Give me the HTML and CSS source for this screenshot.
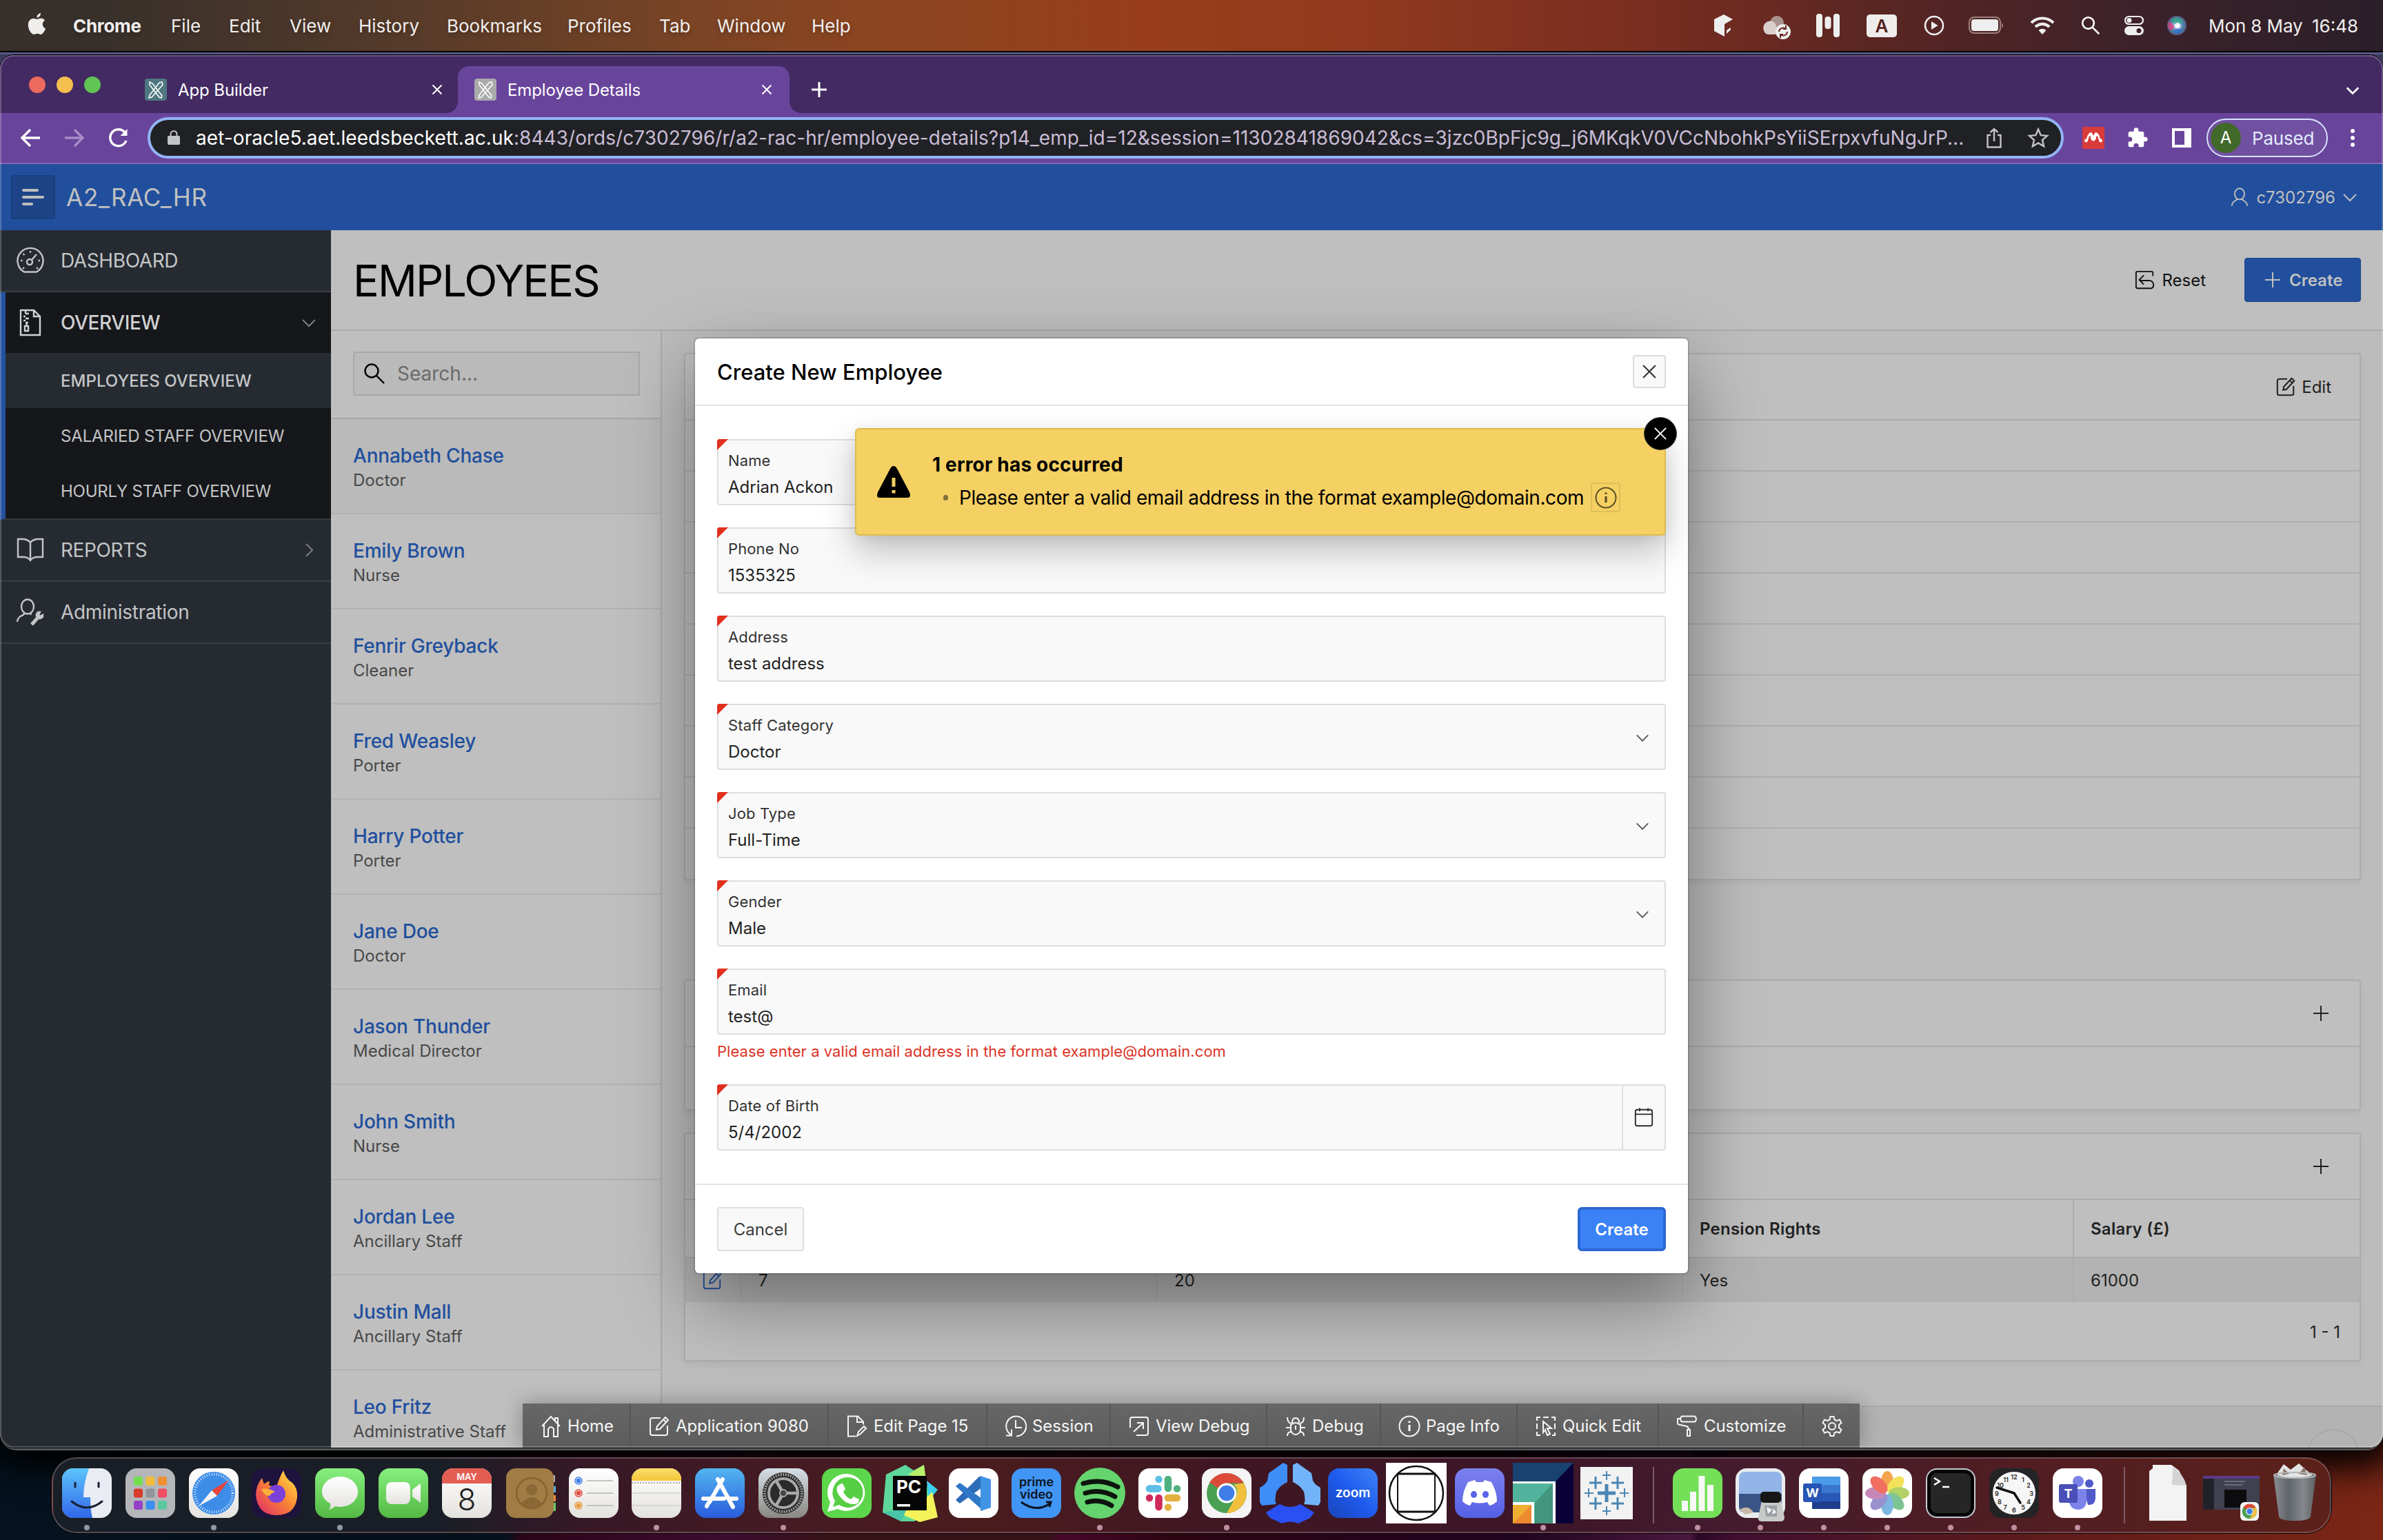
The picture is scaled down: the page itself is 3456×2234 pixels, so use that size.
FILE: index.html
```html
<!DOCTYPE html>
<html lang="en">
<head>
<meta charset="utf-8">
<title>Employee Details</title>
<link rel="stylesheet" href="styles.css">
</head>
<body>
<svg class="defs" width="0" height="0">
  <defs>
    <linearGradient id="g-blue" x1="0" y1="0" x2="0" y2="1"><stop offset="0" stop-color="#5cc4fb"/><stop offset="1" stop-color="#3267ea"/></linearGradient>
    <linearGradient id="g-store" x1="0" y1="0" x2="0" y2="1"><stop offset="0" stop-color="#52b5f0"/><stop offset="1" stop-color="#2a5cdc"/></linearGradient>
    <linearGradient id="g-green" x1="0" y1="0" x2="0" y2="1"><stop offset="0" stop-color="#86ef7e"/><stop offset="1" stop-color="#54b944"/></linearGradient>
    <linearGradient id="g-white" x1="0" y1="0" x2="0" y2="1"><stop offset="0" stop-color="#ffffff"/><stop offset="1" stop-color="#e4e2de"/></linearGradient>
    <linearGradient id="g-fire" x1="1" y1="0" x2="0" y2="1"><stop offset="0" stop-color="#fff04a"/><stop offset=".45" stop-color="#fb8a32"/><stop offset="1" stop-color="#e0266a"/></linearGradient>
    <linearGradient id="g-yellow" x1="0" y1="0" x2="0" y2="1"><stop offset="0" stop-color="#fbdf6b"/><stop offset="1" stop-color="#f4c43a"/></linearGradient>
    <linearGradient id="g-gray" x1="0" y1="0" x2="0" y2="1"><stop offset="0" stop-color="#d5dfe6"/><stop offset="1" stop-color="#8a8783"/></linearGradient>
    <linearGradient id="g-disc" x1="0" y1="0" x2="0" y2="1"><stop offset="0" stop-color="#7c80ee"/><stop offset="1" stop-color="#5560e4"/></linearGradient>
    <linearGradient id="g-zoom" x1="1" y1="0" x2="0" y2="1"><stop offset="0" stop-color="#3f86f5"/><stop offset=".5" stop-color="#1e5aee"/><stop offset="1" stop-color="#1a45b8"/></linearGradient>
    <linearGradient id="g-trash" x1="0" y1="0" x2="1" y2="0"><stop offset="0" stop-color="#8c9094"/><stop offset=".35" stop-color="#5f6468"/><stop offset=".7" stop-color="#85898d"/><stop offset="1" stop-color="#5a5e61"/></linearGradient>
    <radialGradient id="g-siri"><stop offset="0" stop-color="#ffffff"/><stop offset=".3" stop-color="#a9b4e4"/><stop offset=".65" stop-color="#4a83a8"/><stop offset="1" stop-color="#5a5a80"/></radialGradient>
    <symbol id="i-x" viewBox="0 0 16 16"><path d="M1.5 1.5l13 13M14.5 1.5l-13 13"/></symbol>
    <symbol id="i-down" viewBox="0 0 24 24"><path d="M3 8l9 9 9-9"/></symbol>
    <symbol id="i-right" viewBox="0 0 24 24"><path d="M8 3l9 9-9 9"/></symbol>
    <symbol id="i-plus" viewBox="0 0 24 24"><path d="M12 1v22M1 12h22"/></symbol>
    <symbol id="i-tools" viewBox="0 0 32 32"><path d="M7 5l4 2 14 18-1 3-3-1L7 9zM25 5l-4 1L7 24l-1 4 4-1L26 9z"/></symbol>
    <symbol id="i-edit" viewBox="0 0 32 32"><path d="M18 4H6a3 3 0 0 0-3 3v19a3 3 0 0 0 3 3h19a3 3 0 0 0 3-3V15M12 21l1-5L25 3l4 4-12 13zM22 6l4 4"/></symbol>
    <symbol id="i-info" viewBox="0 0 32 32"><circle cx="16" cy="16" r="14.5"/><path d="M16 14v9M16 8.5v2.6" stroke-width="3.2"/></symbol>
    <symbol id="i-user" viewBox="0 0 32 32"><ellipse cx="16" cy="11" rx="7.5" ry="8.6"/><path d="M12.500 18.500c-1 4-8 2.500-8.500 11M19.500 18.500c1 4 8 2.500 8.500 11"/></symbol>
    <symbol id="i-search" viewBox="0 0 32 32"><circle cx="12" cy="12" r="9.500"/><path d="M19 19l11 11"/></symbol>
    <symbol id="i-chrome" viewBox="0 0 60 60"><circle cx="30" cy="30" r="28" fill="#4aa052"/><path d="M30 2a28 28 0 0 1 24 14H30a14 14 0 0 0-12 7L6 15A28 28 0 0 1 30 2z" fill="#dc4a3a"/><path d="M54 16a28 28 0 0 1-24 42l12-21a14 14 0 0 0-2-19z" fill="#f3c03e"/><circle cx="30" cy="30" r="14" fill="#fff"/><circle cx="30" cy="30" r="11" fill="#3f7de8"/></symbol>
  </defs>
</svg>

<header class="menubar">
  <svg class="apple" viewBox="0 0 26 32"><path fill="#efeeed" d="M18.500 0c.3 3-2.300 6.500-5.500 6.600C12.600 3.500 15.600.4 18.500 0zM13.300 8.800c1.200 0 3-1.400 5.600-1.400 2 0 4.300 1 5.700 3.200-5 3-4.100 9.900 1 11.900-1 3-4 8.400-7 8.400-1.900 0-2.700-1.200-5-1.200s-3.100 1.200-5 1.200C4.700 30.900.3 23.400.3 17.300c0-6 3.700-9.600 7.500-9.600 2.500 0 4.300 1.100 5.500 1.100z"/></svg>
  <nav class="menus">
    <b class="m1">Chrome</b><span class="m2">File</span><span class="m3">Edit</span><span class="m4">View</span><span class="m5">History</span><span class="m6">Bookmarks</span><span class="m7">Profiles</span><span class="m8">Tab</span><span class="m9">Window</span><span>Help</span>
  </nav>
  <div class="status">
    <svg width="28" height="34" viewBox="0 0 28 34"><path fill="#eee" d="M14 1L27 8 15 15v18L0 25V8zM18 24l6-4v3l-6 6z"/></svg>
    <svg width="44" height="36" viewBox="0 0 44 36"><circle cx="21" cy="11" r="10" fill="#aa928c"/><path fill="#d9d0cd" d="M2 22a10 10 0 0 1 16-11l6 14-6 3H10a8 8 0 0 1-8-6z"/><circle cx="30" cy="24" r="11" fill="#eee"/><path d="M24 24a6 6 0 0 1 10-4M36 24a6 6 0 0 1-10 4M34 15v5h-4M26 33v-5h4" fill="none" stroke="#6a2a22" stroke-width="2"/></svg>
    <svg width="36" height="34" viewBox="0 0 36 34"><rect x="1" width="9" height="34" rx="4" fill="#eee"/><rect x="13.500" y="4" width="9" height="18" rx="4" fill="#eee"/><rect x="26" width="9" height="34" rx="4" fill="#eee"/></svg>
    <span class="input-a">A</span>
    <svg width="30" height="30" viewBox="0 0 30 30"><circle cx="15" cy="15" r="13" fill="none" stroke="#eee" stroke-width="2.500"/><path d="M11 9l9.500 6-9.500 6z" fill="#eee"/></svg>
    <svg width="52" height="26" viewBox="0 0 52 26"><rect x="1" y="1" width="45" height="23" rx="7" fill="none" stroke="#9d807c" stroke-width="2"/><rect x="4" y="4" width="39" height="17" rx="4" fill="#eee"/><path d="M48 9q4 4 0 8z" fill="#9d807c"/></svg>
    <svg width="36" height="28" viewBox="0 0 36 28"><path d="M2 10a23 23 0 0 1 32 0M8 16a14 14 0 0 1 20 0" fill="none" stroke="#eee" stroke-width="4.200"/><path d="M18 27l-5.500-6a8 8 0 0 1 11 0z" fill="#eee"/></svg>
    <svg width="28" height="28" viewBox="0 0 32 32" class="ic white w3"><use href="#i-search"/></svg>
    <svg width="30" height="30" viewBox="0 0 30 30"><rect x="2" y="2" width="26" height="11" rx="5.500" fill="none" stroke="#eee" stroke-width="2.200"/><circle cx="8" cy="7.500" r="3.500" fill="#eee"/><rect x="1" y="16" width="28" height="13" rx="6.500" fill="#eee"/><circle cx="22" cy="22.500" r="3.500" fill="#3c2128"/></svg>
    <svg width="28" height="28" viewBox="0 0 28 28"><circle cx="14" cy="14" r="14" fill="url(#g-siri)"/><path d="M6 5q8-6 17 2 0 5-8 6-7-1-9-8z" fill="#2fac84" opacity=".7"/><path d="M2 9q6 0 8 8-3 4-6 4-4-5-2-12z" fill="#e83a78" opacity=".75"/><path d="M10 20q6-3 13 1-6 7-13 4z" fill="#2c6cd0" opacity=".7"/><circle cx="15" cy="14" r="4" fill="#fff" opacity=".85"/></svg>
    <span class="date">Mon 8 May</span><span class="time">16:48</span>
  </div>
</header>

<div class="backwin">
<div class="window">
  <div class="tabs">
    <div class="lights"><i class="red"></i><i class="amber"></i><i class="green"></i></div>
    <div class="tab one"><svg class="fav teal" viewBox="0 0 32 32"><use href="#i-tools"/></svg><span>App Builder</span><svg class="ic white close"><use href="#i-x"/></svg></div>
    <div class="tab two"><svg class="fav grey" viewBox="0 0 32 32"><use href="#i-tools"/></svg><span>Employee Details</span><svg class="ic white close"><use href="#i-x"/></svg></div>
    <svg class="ic white newtab"><use href="#i-plus"/></svg>
    <svg class="ic white tabmenu"><use href="#i-down"/></svg>
  </div>
  <div class="toolbar">
    <svg class="ic white nav" viewBox="0 0 32 32"><path d="M30 16H4M16 4L4 16l12 12"/></svg>
    <svg class="ic white nav dim" viewBox="0 0 32 32"><path d="M2 16h26M16 4l12 12-12 12"/></svg>
    <svg class="ic white nav" viewBox="0 0 32 32"><path d="M27 20A12 12 0 1 1 24.500 7.500"/><path d="M28.500 3v10h-10z" fill="#fff" stroke="none"/></svg>
    <div class="omnibox">
      <svg class="lock" viewBox="0 0 18 22"><rect x="0" y="8" width="18" height="13" rx="2" fill="#c4c5c8"/><path d="M4.500 9V5.500a4.500 4.500 0 0 1 9 0V9" fill="none" stroke="#c4c5c8" stroke-width="2"/></svg>
      <div class="url"><b>aet-oracle5.aet.leedsbeckett.ac.uk</b><span>:8443/ords/c7302796/r/a2-rac-hr/employee-details?p14_emp_id=12&amp;session=11302841869042&amp;cs=3jzc0BpFjc9g_j6MKqkV0VCcNbohkPsYiiSErpxvfuNgJrP...</span></div>
      <svg class="ic share" viewBox="0 0 32 32"><path d="M11 12H6.500v17.500h19V12H21M16 21V3M10.500 8L16 3l5.500 5"/></svg>
      <svg class="ic star" viewBox="0 0 32 32"><path d="M16 3.500l3.700 8.600 9.300.8-7 6.200 2.100 9.100L16 23.400l-8.100 4.800L10 19.100l-7-6.200 9.300-.8z"/></svg>
    </div>
    <svg class="mendeley" viewBox="0 0 32 32"><path fill="#d83b3a" d="M0 0h32v32H0z"/><path d="M5.500 20q2-1 2.500-5 1-4 3.500-4 3 .5 4.500 4 1.500-3.500 4.500-4 2.500 0 3.500 4 .5 4 2.500 5" stroke="#fff" stroke-width="2.600" fill="none"/><circle cx="12" cy="11" r="2.700" fill="#fff"/><circle cx="20" cy="11" r="2.700" fill="#fff"/><circle cx="5.500" cy="20" r="2.400" fill="#fff"/><circle cx="26.500" cy="20" r="2.400" fill="#fff"/><path d="M12 12q2 3 1 6M20 12q-2 3-1 6" stroke="#fff" stroke-width="2"/><circle cx="16" cy="17.500" r="3" fill="#fff"/></svg>
    <svg class="puzzle" viewBox="0 0 24 24"><path fill="#fff" d="M20.500 11H19V7a2 2 0 0 0-2-2h-4V3.500a2.500 2.500 0 0 0-5 0V5H4a2 2 0 0 0-2 2v3.800h1.500a2.700 2.700 0 0 1 0 5.400H2V20c0 1.100.9 2 2 2h3.800v-1.500a2.700 2.700 0 0 1 5.400 0V22H17a2 2 0 0 0 2-2v-4h1.500a2.500 2.500 0 0 0 0-5z"/></svg>
    <i class="panel"></i>
    <div class="pill"><span class="ava">A</span><span>Paused</span></div>
    <div class="dots"><i></i><i></i><i></i></div>
  </div>

  <div class="apphead">
    <button class="burger"><i class="l1"></i><i class="l2"></i><i class="l3"></i></button>
    <span class="appname">A2_RAC_HR</span>
    <div class="userbox"><svg class="ic" viewBox="0 0 32 32"><use href="#i-user"/></svg><span>c7302796</span><svg class="ic chev"><use href="#i-down"/></svg></div>
  </div>

  <div class="body">
    <aside class="side">
      <a class="row"><svg class="ic" viewBox="0 0 40 40"><path d="M11 36.500a18.500 18.500 0 1 1 18 0z"/><circle cx="19" cy="22" r="4"/><path d="M22 19l7-8M20 6v2.500M6 20h2.500M31.500 20H34M9.500 10l2 2M11 30l-2 2M29 30l2 2"/></svg><span>DASHBOARD</span></a>
      <div class="group">
        <a class="row cur"><svg class="ic" viewBox="0 0 40 40"><path d="M6 2h19l9 9v27H6zM25 2v9h9M13 2v5M13 7h5M13 11h-3M13 14h5M13 17h-3M13 20h4M12 25h5v7h-5zM14.500 20v5"/></svg><span>OVERVIEW</span><svg class="ic tog"><use href="#i-down"/></svg></a>
        <a class="sub on">EMPLOYEES OVERVIEW</a>
        <a class="sub s2">SALARIED STAFF OVERVIEW</a>
        <a class="sub s3">HOURLY STAFF OVERVIEW</a>
      </div>
      <a class="row"><svg class="ic" viewBox="0 0 40 40"><path d="M20 9Q16 4 8 4H2v26h7q8 0 11 5 3-5 11-5h7V4h-6q-8 0-12 5zM20 9v26"/></svg><span>REPORTS</span><svg class="ic tog"><use href="#i-right"/></svg></a>
      <a class="row"><svg class="ic" viewBox="0 0 40 40"><ellipse cx="16" cy="12" rx="9" ry="10.500"/><path d="M12 21c-1 5-10 3-11 13M20 21l1 3"/><path d="M22 38l8-9" stroke-width="5"/><path d="M31 20q-4 4-1 8 4 3 8-1v-3l-4 2-2-2 2-4z" fill="#c3c5c6"/></svg><span class="adm">Administration</span></a>
    </aside>

    <main class="main">
      <div class="titlebar">
        <h1>EMPLOYEES</h1>
        <div class="reset"><svg class="ic" viewBox="0 0 32 32"><path d="M28 10V5a2 2 0 0 0-2-2H4a2 2 0 0 0-2 2v22a2 2 0 0 0 2 2h22q3-1 3-5v-1q-1-5-6-6H8M14 9l-7 7 7 7"/></svg><span>Reset</span></div>
        <div class="create"><svg class="ic"><use href="#i-plus"/></svg><span>Create</span></div>
      </div>
      <div class="cols">
        <section class="list">
          <div class="searchrow"><div class="search"><svg class="ic"><use href="#i-search"/></svg><span>Search...</span></div></div>
          <div class="person hov"><b>Annabeth Chase</b><span>Doctor</span></div>
          <div class="person"><b>Emily Brown</b><span>Nurse</span></div>
          <div class="person"><b>Fenrir Greyback</b><span>Cleaner</span></div>
          <div class="person"><b>Fred Weasley</b><span>Porter</span></div>
          <div class="person"><b>Harry Potter</b><span>Porter</span></div>
          <div class="person"><b>Jane Doe</b><span>Doctor</span></div>
          <div class="person"><b>Jason Thunder</b><span>Medical Director</span></div>
          <div class="person"><b>John Smith</b><span>Nurse</span></div>
          <div class="person"><b>Jordan Lee</b><span>Ancillary Staff</span></div>
          <div class="person"><b>Justin Mall</b><span>Ancillary Staff</span></div>
          <div class="person"><b>Leo Fritz</b><span>Administrative Staff</span></div>
        </section>
        <section class="detail">
          <div class="card c1"><div class="chead"><div class="editbtn"><svg class="ic"><use href="#i-edit"/></svg><span>Edit</span></div></div>
            <i></i><i></i><i></i><i></i><i></i><i></i><i></i><i></i><i class="last"></i></div>
          <div class="card c2"><div class="chead"><svg class="ic add"><use href="#i-plus"/></svg></div></div>
          <div class="card c3"><div class="chead"><svg class="ic add"><use href="#i-plus"/></svg></div>
            <div class="tr th"><span></span><span></span><span></span><span>Pension Rights</span><span>Salary (£)</span></div>
            <div class="tr td"><span class="pen"><svg class="ic"><use href="#i-edit"/></svg></span><span>7</span><span>20</span><span>Yes</span><span>61000</span></div>
            <div class="pager">1 - 1</div></div>
          <div class="foot"><i class="totop"></i></div>
        </section>
      </div>
    </main>
  </div>

  <div class="devbar">
    <a class="d1"><svg class="ic"><path d="M3 16L16 2l13 14M6 14v17h6V20q4-6 8 0v11h6V14M22 8V4h4v9"/></svg>Home</a>
    <a class="d2"><svg class="ic"><use href="#i-edit"/></svg>Application 9080</a>
    <a class="d3"><svg class="ic"><path d="M14 30.500H3V1.500h14l8 8v4M16 2v8h8M16 30l2-6 8-8 3 3-8 8z"/></svg>Edit Page 15</a>
    <a class="d4"><svg class="ic"><path d="M17 30.500a14.500 14.500 0 1 0-12-6l4 4M16 7v11h9M2 29.500h8v-9"/></svg>Session</a>
    <a class="d5"><svg class="ic"><path d="M3 18V6a3 3 0 0 1 3-3h20a3 3 0 0 1 3 3v20a3 3 0 0 1-3 3h-14M8 24l14-13M13 11h9v9"/></svg>View Debug</a>
    <a class="d6"><svg class="ic"><path d="M9 14q7-6 14 0v8q-2 6-7 6t-7-6zM16 15v6M11 11q0-7 5-7t5 7M2 18h7M23 18h7M4 3q0 8 6 9M28 3q0 8-6 9M4 30q0-6 6-6M28 30q0-6-6-6"/></svg>Debug</a>
    <a class="d7"><svg class="ic"><use href="#i-info"/></svg>Page Info</a>
    <a class="d8"><svg class="ic"><path d="M3 8V3h5M12 3h8M24 3h5v5M29 12v8M29 25v4h-4M3 12v8M3 24v5h5M12 9l12 10h-6l4 8-4 2-3-8-3 4z"/></svg>Quick Edit</a>
    <a class="d9"><svg class="ic"><path d="M8 1.500h19q4 4 0 8H8q-4-4 0-8zM6 5H2v6q0 3 4 3l9 2q3 1 3 5M16 21h4v9h-4z"/></svg>Customize</a>
    <a class="d10"><svg class="ic"><circle cx="16" cy="16" r="5"/><path d="M13.500 2h5l1 4.500 3 1.500 4.500-1.500 2.500 4.500-3.500 3v4l3.500 3-2.500 4.500-4.500-1.500-3 1.500-1 4.500h-5l-1-4.500-3-1.500L5 25.500 2.500 21 6 18v-4l-3.500-3L5 6.500 9.500 8l3-1.500z"/></svg></a>
  </div>

  <div class="modal">
    <div class="mhead"><span>Create New Employee</span><button class="mclose"><svg class="ic"><use href="#i-x"/></svg></button></div>
    <div class="mbody">
      <div class="field"><label>Name</label><span>Adrian Ackon</span></div>
      <div class="field"><label>Phone No</label><span>1535325</span></div>
      <div class="field"><label>Address</label><span>test address</span></div>
      <div class="field sel"><label>Staff Category</label><span>Doctor</span><svg class="ic"><use href="#i-down"/></svg></div>
      <div class="field sel"><label>Job Type</label><span>Full-Time</span><svg class="ic"><use href="#i-down"/></svg></div>
      <div class="field sel"><label>Gender</label><span>Male</span><svg class="ic"><use href="#i-down"/></svg></div>
      <div class="field err"><label>Email</label><span>test@</span></div>
      <p class="errtext">Please enter a valid email address in the format example@domain.com</p>
      <div class="field"><label>Date of Birth</label><span>5/4/2002</span><div class="cal"><svg class="ic" viewBox="0 0 32 32"><rect x="3" y="4" width="26" height="25" rx="3"/><path d="M3 11h26M9.500 1.500v5M22.500 1.500v5"/></svg></div></div>
    </div>
    <div class="mfoot"><button class="cancel">Cancel</button><button class="ok">Create</button></div>
    <div class="alert">
      <svg class="warn" viewBox="0 0 48 46"><path d="M24 0q3 0 5 4l18 34q3 8-3 8H4q-6 0-3-8L19 4q2-4 5-4z"/><path d="M24 17v13M24 35v4.500" stroke="#f5d062" stroke-width="5"/></svg>
      <div class="atext"><b>1 error has occurred</b><p><i></i><span>Please enter a valid email address in the format example@domain.com</span><em><svg class="ic"><use href="#i-info"/></svg></em></p></div>
      <button class="aclose"><svg class="ic"><use href="#i-x"/></svg></button>
    </div>
  </div>
</div>
</div>

<div class="dock">
  <div class="app run"><svg viewBox="0 0 88 88"><rect x="8" y="8" width="72" height="72" rx="16" fill="#e9ecf2"/><path d="M24 8h23q-8 22-8 42h10q0 18 3 30H24a16 16 0 0 1-16-16V24A16 16 0 0 1 24 8z" fill="url(#g-blue)"/><path d="M27 29v6M61 29v6M22 56q22 18 44 0" fill="none" stroke="#1a2030" stroke-width="3" stroke-linecap="round"/></svg></div>
  <div class="app"><svg viewBox="0 0 88 88"><rect x="8" y="8" width="72" height="72" rx="16" fill="#b4b6ba"/><rect x="20" y="20" width="13" height="13" rx="3" fill="#72e04e"/><rect x="37.500" y="20" width="13" height="13" rx="3" fill="#f2bd3c"/><rect x="55" y="20" width="13" height="13" rx="3" fill="#ef9030"/><rect x="20" y="37.500" width="13" height="13" rx="3" fill="#d83a2c"/><rect x="37.500" y="37.500" width="13" height="13" rx="3" fill="#90959b"/><rect x="55" y="37.500" width="13" height="13" rx="3" fill="#f04c62"/><rect x="20" y="55" width="13" height="13" rx="3" fill="#9440c8"/><rect x="37.500" y="55" width="13" height="13" rx="3" fill="#3a90f0"/><rect x="55" y="55" width="13" height="13" rx="3" fill="#5cc8a0"/></svg></div>
  <div class="app run"><svg viewBox="0 0 88 88"><rect x="8" y="8" width="72" height="72" rx="16" fill="url(#g-white)"/><circle cx="44" cy="44" r="31" fill="#3d8ce8"/><circle cx="44" cy="44" r="27.500" fill="none" stroke="#d9ecff" stroke-width="4" stroke-dasharray="1 2.500"/><path d="M66 25L49 48l-8-8z" fill="#e8453a"/><path d="M22 63l19-23 8 8z" fill="#f3f3f3"/></svg></div>
  <div class="app"><svg viewBox="0 0 88 88"><rect x="8" y="8" width="72" height="72" rx="16" fill="#1e133c"/><path d="M14 47q0-14 9-25l3 9q4-4 8-4l-1 6q8 0 10 6 4-16 11-28 3 12 13 18 8 8 7 21-3 26-30 26T14 47z" fill="url(#g-fire)"/><circle cx="44" cy="45" r="13" fill="#7a40d8"/><path d="M22 38q10-2 20 4-6 2-8 6-8 0-12-10z" fill="#fdaf3a"/></svg></div>
  <div class="app run"><svg viewBox="0 0 88 88"><rect x="8" y="8" width="72" height="72" rx="16" fill="url(#g-green)"/><path d="M44 20c15 0 26 10 26 22S59 64 44 64q-4 0-7-1-4 4-9 5 3-4 2-9c-7-4-12-10-12-17 0-12 11-22 26-22z" fill="url(#g-white)"/></svg></div>
  <div class="app"><svg viewBox="0 0 88 88"><rect x="8" y="8" width="72" height="72" rx="16" fill="url(#g-green)"/><rect x="19" y="28" width="35" height="32" rx="8" fill="url(#g-white)"/><path d="M57 39l12-9v28l-12-9z" fill="url(#g-white)"/></svg></div>
  <div class="app"><svg viewBox="0 0 88 88"><rect x="8" y="8" width="72" height="72" rx="16" fill="url(#g-white)"/><path d="M8 30v-6A16 16 0 0 1 24 8h40a16 16 0 0 1 16 16v6z" fill="#e35d52"/><text x="44" y="25" class="t-may">MAY</text><text x="44" y="69" class="t-day">8</text></svg></div>
  <div class="app"><svg viewBox="0 0 88 88"><path d="M76 18h4v10h-4z" fill="#aaa"/><path d="M76 34h5v9h-5z" fill="#5aa8d8"/><path d="M76 47h5v9h-5z" fill="#ea8a3a"/><path d="M76 58h5v12h-5z" fill="#64c864"/><rect x="9" y="8" width="69" height="72" rx="14" fill="#a17c45"/><circle cx="46" cy="44" r="22" fill="none" stroke="#85632f" stroke-width="2.500"/><circle cx="46" cy="39" r="8" fill="#8a6836"/><path d="M31 59q15-18 30 0-15 12-30 0z" fill="#8a6836"/></svg></div>
  <div class="app"><svg viewBox="0 0 88 88"><rect x="8" y="8" width="72" height="72" rx="16" fill="url(#g-white)"/><g stroke-width="1.500" fill="none"><circle cx="22" cy="26" r="5" stroke="#3a7be8"/><circle cx="22" cy="44" r="5" stroke="#e0483c"/><circle cx="22" cy="62" r="5" stroke="#e89a3a"/></g><circle cx="22" cy="26" r="3.300" fill="#3a7be8"/><circle cx="22" cy="44" r="3.300" fill="#e0483c"/><circle cx="22" cy="62" r="3.300" fill="#e89a3a"/><path d="M34 26h38M34 44h38M34 62h38" stroke="#b4b4b4" stroke-width="1.600"/></svg></div>
  <div class="app run"><svg viewBox="0 0 88 88"><rect x="8" y="8" width="72" height="72" rx="16" fill="url(#g-white)"/><path d="M8 26v-2A16 16 0 0 1 24 8h40a16 16 0 0 1 16 16v2z" fill="url(#g-yellow)"/><path d="M8 29h72" stroke="#aaa" stroke-width="2" stroke-dasharray="2 2"/><path d="M8 44h72M8 62h72" stroke="#cfcfcb" stroke-width="1.600"/></svg></div>
  <div class="app"><svg viewBox="0 0 88 88"><rect x="8" y="8" width="72" height="72" rx="16" fill="url(#g-store)"/><path d="M48 24L29 57M41 24l22 40M20 52h30M59 52h9M25 63l2-4" stroke="#fff" stroke-width="6" stroke-linecap="round"/></svg></div>
  <div class="app run"><svg viewBox="0 0 88 88"><rect x="8" y="8" width="72" height="72" rx="16" fill="url(#g-gray)"/><circle cx="44" cy="44" r="30" fill="#2b2b2c"/><circle cx="44" cy="44" r="27" fill="none" stroke="#9a9a9a" stroke-width="4" stroke-dasharray="2 1.600"/><circle cx="44" cy="44" r="21" fill="none" stroke="#a8a8a8" stroke-width="4"/><path d="M44 44h21M44 44L33.500 26M44 44L33.500 62" stroke="#a8a8a8" stroke-width="4.500"/><circle cx="44" cy="44" r="5" fill="#444" stroke="#a8a8a8" stroke-width="2"/></svg></div>
  <div class="app"><svg viewBox="0 0 88 88"><rect x="8" y="8" width="72" height="72" rx="16" fill="#5cd64a"/><path d="M44 16a27 27 0 1 1-13 51l-15 4 4-14A27 27 0 0 1 44 16z" fill="#fff"/><path d="M45 21a22 22 0 1 1-12 40l-9 3 3-9A22 22 0 0 1 45 21z" fill="#56cf44"/><path d="M34 31l4-1 4 8-3 4q4 8 11 11l4-4 8 4q0 6-6 7-12 1-20-9-8-8-6-16z" fill="#fff"/></svg></div>
  <div class="app"><svg viewBox="0 0 88 88"><path d="M9 17L37 3l12 8L64 3l2 22 10 40-26 20H31L4 72z" fill="#5ed89a"/><path d="M64 3l3 22-26-8z" fill="#b8f06a"/><path d="M68 26l16 13-13 16z" fill="#3cd0f0"/><path d="M76 42l8 37-26 7-32-14 34-14z" fill="#f4f45a"/><path d="M4 72l27 13 8-18z" fill="#4ac4a8"/><rect x="19" y="19" width="49" height="50" fill="#050505"/><text x="24" y="44" class="t-pc">PC</text><path d="M25 60h19v3.500H25z" fill="#fff"/></svg></div>
  <div class="app"><svg viewBox="0 0 88 88"><rect x="8" y="8" width="72" height="72" rx="16" fill="#fff"/><path d="M56 20v16L24 59l-6-5 34-34z" fill="#2c6cb8"/><path d="M18 34l6-5 32 23v16z" fill="#2f78c8"/><path d="M54 19l15 5v41l-15 5z" fill="#3f94e4"/></svg></div>
  <div class="app"><svg viewBox="0 0 88 88"><rect x="8" y="8" width="72" height="72" rx="16" fill="#4195f4"/><text x="44" y="34" class="t-pv">prime</text><text x="44" y="52" class="t-pv">video</text><path d="M22 57q22 16 42 2M58 57l7 0-2 7" fill="none" stroke="#0c1420" stroke-width="3"/></svg></div>
  <div class="app run"><svg viewBox="0 0 88 88"><circle cx="44" cy="44" r="37" fill="#65d46e"/><path d="M20 30q26-8 50 5M23 44q22-7 43 5M26 57q18-5 35 5" fill="none" stroke="#0c140d" stroke-width="7" stroke-linecap="round"/></svg></div>
  <div class="app"><svg viewBox="0 0 88 88"><rect x="8" y="8" width="72" height="72" rx="16" fill="#fff"/><g stroke-width="10.500" stroke-linecap="round"><path d="M37.500 24v0M36.500 37.500H24" stroke="#5cc0e8"/><path d="M51 24v13M64 37.500v0" stroke="#4fb080"/><path d="M51 51h13M51 64.500v0" stroke="#e4b040"/><path d="M37.500 51v13M24 51v0" stroke="#d02a5c"/></g></svg></div>
  <div class="app run"><svg viewBox="0 0 88 88"><rect x="8" y="8" width="72" height="72" rx="16" fill="#f4f4f4"/><use href="#i-chrome" x="13" y="12" width="62" height="64"/></svg></div>
  <div class="app"><svg viewBox="0 0 88 88"><path d="M13 15L34 0l6 3v25q-10 4-16 14-3 14 0 18L3 62l-3-5V36q8-4 11-10z" fill="#3f8ef8"/><path d="M75 15L54 0l-6 3v25q10 4 16 14 3 14 0 18l21 2 3-5V36q-8-4-11-10z" fill="#72b4fa"/><path d="M9 72l20-12q15 8 30 0l20 12-6 8-17 8q-12-5-24 0l-17-8z" fill="#2a50f4"/></svg></div>
  <div class="app"><svg viewBox="0 0 88 88"><rect x="8" y="8" width="72" height="72" rx="16" fill="url(#g-zoom)"/><text x="44" y="50" class="t-zoom">zoom</text></svg></div>
  <div class="app"><svg viewBox="0 0 88 88"><path d="M0 0h88v88H0z" fill="#fff"/><ellipse cx="44" cy="44" rx="39" ry="39" fill="none" stroke="#111" stroke-width="2.500"/><path d="M16 16h56M16 71h56" stroke="#111" stroke-width="3"/><path d="M17 16v56M71 16v56" stroke="#111" stroke-width="2"/></svg></div>
  <div class="app"><svg viewBox="0 0 88 88"><rect x="8" y="8" width="72" height="72" rx="16" fill="url(#g-disc)"/><path d="M27 28l10-3 2 3h10l2-3 10 3q8 14 8 28-5 5-11 6l-3-5q-11 3-22 0l-3 5q-6-1-11-6 0-14 8-28z" fill="#fff"/><ellipse cx="35.500" cy="46" rx="4.500" ry="5" fill="#5a62e6"/><ellipse cx="52.500" cy="46" rx="4.500" ry="5" fill="#5a62e6"/></svg></div>
  <div class="app run"><svg viewBox="0 0 88 88"><path d="M0 0h88v88H0z" fill="#0a0038"/><path d="M0 0h88L62 27H0z" fill="#1a4270"/><path d="M0 27h62v61H0z" fill="#fff"/><path d="M0 30h58v58H0z" fill="#52b49c"/><path d="M58 30v58H32V58z" fill="#43957e"/><path d="M0 57h31v31H0z" fill="#fff"/><path d="M0 61h27v27H0z" fill="#f0ae34"/><path d="M27 61v27H0z" fill="#ee8a2e"/></svg></div>
  <div class="app"><svg viewBox="0 0 88 88"><path d="M6 6h76v76H6z" fill="#f2f2f2"/><g stroke="#4a86b4" fill="none"><path d="M44 31v26M31 44h26" stroke-width="5"/><path d="M28 20v18M19 29h18M60 20v18M51 29h18M28 50v18M19 59h18M60 50v18M51 59h18" stroke-width="3"/><path d="M44 12v13M38 18h12M44 63v13M38 70h12M18 37v13M12 44h13M70 37v13M63 44h13" stroke-width="2"/></g></svg></div>
  <i class="sep"></i>
  <div class="app run"><svg viewBox="0 0 88 88"><rect x="8" y="8" width="72" height="72" rx="16" fill="#74e058"/><path d="M21 55h9v15h-9zM33 42h9v28h-9zM45.500 19h9v51h-9zM58 32h9v38h-9z" fill="#f6f8f4"/></svg></div>
  <div class="app run"><svg viewBox="0 0 88 88"><rect x="8" y="8" width="72" height="72" rx="16" fill="#e9ebee"/><path d="M13 22q0-9 9-9h44q9 0 9 9v24H13z" fill="#92b4e6"/><path d="M13 45h62v27H22q-9 0-9-9z" fill="#3a5486"/><path d="M14 68q12-8 20 4l-12 3z" fill="#c9b9a8"/><path d="M46 55h28l5 24q0 6-6 6H46q-6 0-5-6z" fill="#c8cac8"/><path d="M50 62h18v16H52z" fill="#9aa0a4"/><path d="M53 64l8 4-6 6zM63 66l4 6-6 3z" fill="#f2f2f2"/><rect x="44" y="42" width="30" height="16" rx="5" fill="#161616"/></svg></div>
  <div class="app run"><svg viewBox="0 0 88 88"><rect x="8" y="8" width="72" height="72" rx="16" fill="#fff"/><path d="M27 20h41v12H27z" fill="#4a9ce8"/><path d="M27 32h41v12H27z" fill="#3a78d0"/><path d="M27 44h41v12H27z" fill="#2a58b8"/><path d="M27 56h41v11H27z" fill="#1e3e8c"/><rect x="14" y="30" width="27" height="27" rx="3" fill="#2854b4"/><text x="27.500" y="50" class="t-w">W</text></svg></div>
  <div class="app run"><svg viewBox="0 0 88 88"><rect x="8" y="8" width="72" height="72" rx="16" fill="#fff"/><g opacity=".88"><ellipse cx="44" cy="27" rx="9" ry="15" fill="#f39a36"/><ellipse cx="44" cy="27" rx="9" ry="15" fill="#f3dd44" transform="rotate(45 44 44)"/><ellipse cx="44" cy="27" rx="9" ry="15" fill="#a8cc54" transform="rotate(90 44 44)"/><ellipse cx="44" cy="27" rx="9" ry="15" fill="#6cbc84" transform="rotate(135 44 44)"/><ellipse cx="44" cy="27" rx="9" ry="15" fill="#6cacdc" transform="rotate(180 44 44)"/><ellipse cx="44" cy="27" rx="9" ry="15" fill="#8c84c8" transform="rotate(225 44 44)"/><ellipse cx="44" cy="27" rx="9" ry="15" fill="#c078b0" transform="rotate(270 44 44)"/><ellipse cx="44" cy="27" rx="9" ry="15" fill="#ee5c4c" transform="rotate(315 44 44)"/></g></svg></div>
  <div class="app run"><svg viewBox="0 0 88 88"><rect x="8" y="8" width="72" height="72" rx="16" fill="#c4ccd2"/><rect x="10" y="10" width="68" height="68" rx="14" fill="#050505"/><rect x="15" y="15" width="58" height="58" rx="9" fill="#262626"/><path d="M20 22l8 5-8 5M32 35h10" fill="none" stroke="#fff" stroke-width="2.500"/></svg></div>
  <div class="app run"><svg viewBox="0 0 88 88"><rect x="8" y="8" width="72" height="72" rx="16" fill="#242426"/><circle cx="44" cy="44" r="31" fill="#f6f6f6"/><g class="t-clock"><text x="44" y="24">12</text><text x="57" y="28">1</text><text x="65" y="36">2</text><text x="69" y="48">3</text><text x="65" y="60">4</text><text x="57" y="68">5</text><text x="44" y="72">6</text><text x="31" y="68">7</text><text x="23" y="60">8</text><text x="19" y="48">9</text><text x="24" y="36">10</text><text x="32" y="28">11</text></g><path d="M44 44L19 36M44 44l9 14" stroke="#111" stroke-width="3.500" stroke-linecap="round"/></svg></div>
  <div class="app run"><svg viewBox="0 0 88 88"><rect x="8" y="8" width="72" height="72" rx="16" fill="#fff"/><circle cx="45" cy="27" r="8" fill="#7b83eb"/><circle cx="61" cy="30" r="6" fill="#5059c9"/><path d="M53 38h17v14q-1 10-11 9z" fill="#5059c9"/><path d="M32 38h25v18q-1 12-13 12-10-1-12-10z" fill="#7b83eb"/><rect x="17" y="31" width="27" height="27" rx="3" fill="#4a4fb8"/><text x="30.500" y="51" class="t-w">T</text></svg></div>
  <i class="sep"></i>
  <div class="app"><svg viewBox="0 0 88 88"><path d="M17 12l5-4V3h27l11 8 11 22v51H17z" fill="#f3f3f3"/><path d="M51 6l-1 26 21 1q-5-18-20-27z" fill="#d4d4d4"/></svg></div>
  <div class="app"><svg viewBox="0 0 88 88"><path d="M3 19h82v49H3z" fill="#3f4050"/><path d="M3 19h82v4H3z" fill="#5c3a8c"/><path d="M3 23h16v45H3z" fill="#20222a"/><path d="M34 39h32v26H34z" fill="#0c0c0e"/><path d="M34 27h30M34 32h26" stroke="#6a6c7c" stroke-width="2"/><rect x="57" y="57" width="27" height="27" rx="6" fill="#f4f4f4"/><use href="#i-chrome" x="59" y="59" width="23" height="23"/></svg></div>
  <div class="app"><svg viewBox="0 0 88 88"><path d="M18 16l10-14 10 8L50 1l10 9 10 8-4 8H22z" fill="#e2e4e4"/><path d="M28 8l8 8-10 2zM58 6l-8 10 12 2z" fill="#8a7468"/><path d="M13 16q31 12 62 0l-8 62q-2 6-23 6t-23-6z" fill="url(#g-trash)"/><ellipse cx="44" cy="18" rx="30" ry="4" fill="none" stroke="#b2b6b8" stroke-width="2"/></svg></div>
</div>
</body>
</html>
```
FILE: styles.css
```css
* { box-sizing: border-box; }
html { background: #04101a; }
body {
  margin: 0; width: 3456px; height: 2234px; overflow: hidden;
  display: flex; flex-direction: column;
  font-family: Inter, "Liberation Sans", sans-serif; font-size: 24px;
  background: linear-gradient(90deg, #04131f 0, #05111c 735px, #2a0518 755px, #3c0c30 1050px, #361318 1200px, #361318 1520px, #48082a 1540px, #2c0512 1700px, #210420 2200px, #4a1840 2450px, #2c0828 2462px, #420f30 2520px, #5a1a1c 2900px, #7c2615 3456px);
}
button { font: inherit; padding: 0; margin: 0; }
h1, p { margin: 0; }
.defs { position: absolute; }
svg { display: block; flex: none; }
.ic { fill: none; stroke: currentColor; stroke-width: 2; }
.white { color: #fff; }
.w3 { stroke-width: 3; }

/* menu bar */
.menubar {
  position: relative; z-index: 1;
  height: 74px; flex: none; display: flex; align-items: center; color: #f1efee; font-size: 26px; padding-left: 40px;
  background: linear-gradient(90deg, #38302b 0, #38302b 150px, #5a3c29 640px, #7a4425 1000px, #8b4521 1250px, #983e1c 1650px, #923a1e 1950px, #7c2e20 2350px, #5a2622 2720px, #40222a 3050px, #2a1f29 3456px);
}
.apple { width: 27px; height: 32px; margin-top: -4px; }
.menus { display: flex; margin-left: 39px; text-shadow: 0 3px 6px rgba(0,0,0,.25); }
.menus b { font-weight: 700; letter-spacing: -.3px; }
.menus .m1 { width: 142px; }
.menus .m2 { width: 84px; }
.menus .m3 { width: 88px; }
.menus .m4 { width: 100px; }
.menus .m5 { width: 128px; }
.menus .m6 { width: 175px; }
.menus .m7 { width: 133px; }
.menus .m8 { width: 84px; }
.menus .m9 { width: 137px; }
.status { margin-left: auto; display: flex; align-items: center; padding-right: 33px; }
.status svg:nth-child(1) { margin-right: 42px; }
.status svg:nth-child(2) { margin-right: 33px; margin-top: 6px; }
.status svg:nth-child(3) { margin-right: 38px; }
.input-a { width: 44px; height: 33px; border-radius: 5px; background: #efeceb; color: #55231f; font-weight: 600; line-height: 33px; text-align: center; margin-right: 39px; }
.status svg:nth-child(5) { margin-right: 35px; }
.status svg:nth-child(6) { margin-right: 37px; }
.status svg:nth-child(7) { margin-right: 38px; }
.status svg:nth-child(8) { margin-right: 34px; }
.status svg:nth-child(9) { margin-right: 33px; }
.status svg:nth-child(10) { margin-right: 32px; }
.date { width: 150px; white-space: nowrap; letter-spacing: -.1px; }
.time { width: 70px; white-space: nowrap; }

/* windows */
.backwin { height: 2030px; flex: none; padding: 6px 0 4px; background: linear-gradient(#000, #000 2px, #69689c 2px, #3a3a60 6px, #555 100px, #565656); border-radius: 0 0 24px 24px; box-shadow: 0 6px 50px 20px #000; }
.window { position: relative; height: 2020px; border-radius: 20px; overflow: hidden; box-shadow: 0 0 0 1px #000; display: flex; flex-direction: column; background: #bfbfbf; }
.window::after { content: ""; position: absolute; inset: 0; border: 2px solid rgba(255,255,255,.22); border-radius: 20px; }

.tabs { height: 84px; flex: none; background: #432a62; display: flex; align-items: flex-end; }
.lights { display: flex; gap: 16px; padding: 0 38px 29px 42px; }
.lights i { width: 24px; height: 24px; border-radius: 50%; }
.red { background: #ed6a5e; } .amber { background: #f4bf4f; } .green { background: #61c554; }
.tab { height: 68px; width: 480px; display: flex; align-items: center; color: #fff; }
.tab span { margin-left: 16px; flex: 1; letter-spacing: -.1px; }
.tab.one { padding: 0 22px 0 26px; }
.tab.two { position: relative; width: 481px; padding: 0 25px 0 24px; background: #69449b; border-radius: 16px 16px 0 0; }
.tab.two::before, .tab.two::after { content: ""; position: absolute; bottom: 0; width: 16px; height: 16px; }
.tab.two::before { left: -16px; background: radial-gradient(circle at 0 0, transparent 15.500px, #69449b 16px); }
.tab.two::after { right: -16px; background: radial-gradient(circle at 100% 0, transparent 15.500px, #69449b 16px); }
.fav { width: 32px; height: 32px; border-radius: 4px; fill: none; stroke: #fff; stroke-width: 1.500; }
.teal { background: #4f7780; } .grey { background: #a9aaac; }
.close { width: 16px; height: 16px; }
.newtab { width: 24px; height: 24px; margin: 0 0 22px 31px; stroke-width: 3; }
.tabmenu { width: 22px; height: 22px; margin: 0 33px 22px auto; stroke-width: 3; }

.toolbar { height: 74px; flex: none; background: #69449b; border-bottom: 2px solid #8a66b4; display: flex; align-items: center; padding-left: 28px; }
.nav { width: 32px; height: 32px; margin-right: 32px; stroke-width: 3.400; }
.nav:nth-child(3) { margin-right: 26px; }
.dim { color: #a78cc7; }
.omnibox { width: 2779px; height: 60px; border: 4px solid #92b4f6; border-radius: 30px; background: #202124; display: flex; align-items: center; padding-left: 25px; color: #c3c4c8; }
.lock { width: 18px; height: 22px; }
.url { width: 2592px; margin-left: 23px; font-size: 28px; white-space: nowrap; color: #c9bcd6; }
.url b { font-weight: 400; color: #fff; letter-spacing: .07px; }
.url span { letter-spacing: .04px; }
.share { width: 32px; height: 32px; stroke-width: 2.400; }
.star { width: 32px; height: 32px; margin-left: 32px; stroke-width: 2.400; }
.mendeley { width: 32px; height: 32px; margin-left: 27px; }
.puzzle { width: 32px; height: 32px; margin-left: 32px; }
.panel { width: 28px; height: 28px; border: 4px solid #fff; border-right-width: 10px; margin-left: 34px; }
.pill { width: 176px; height: 56px; margin-left: 22px; border: 2px solid #d7e3fb; border-radius: 28px; background: #7150a2; color: #e3ebfd; display: flex; align-items: center; padding-left: 4px; font-size: 26px; letter-spacing: -.2px; }
.ava { width: 44px; height: 44px; border-radius: 50%; background: #41692a; color: #fff; font-size: 24px; text-align: center; line-height: 44px; margin-right: 16px; }
.dots { margin-left: 33px; display: grid; gap: 4px; }
.dots i { width: 6px; height: 6px; border-radius: 50%; background: #fff; }

/* application header */
.apphead { height: 96px; flex: none; background: #214f9d; display: flex; align-items: center; padding: 0 36px 0 16px; color: #c0c0c0; }
.burger { width: 64px; height: 64px; border: 2px solid #193e7e; border-radius: 4px; background: #1d4486; display: flex; flex-direction: column; align-items: flex-start; justify-content: center; gap: 6px; padding-left: 14px; }
.burger i { height: 4px; border-radius: 2px; background: #bfbfbf; }
.l1 { width: 24px; } .l2 { width: 32px; } .l3 { width: 16px; }
.appname { font-size: 35px; margin-left: 16px; letter-spacing: .75px; }
.userbox { margin-left: auto; display: flex; align-items: center; }
.userbox .ic { width: 32px; height: 30px; }
.userbox span { margin: 0 9px 0 8px; }
.userbox .chev { width: 24px; height: 24px; }

.body { flex: 1; min-height: 0; display: flex; }
.side { width: 480px; flex: none; background: #262b32; color: #c3c5c6; }
.side .row { height: 90px; display: flex; align-items: center; padding: 0 20px 0 24px; border-bottom: 2px solid #3a3f45; font-size: 28px; }
.side .row .ic { width: 40px; height: 40px; margin-right: 24px; stroke-width: 2.400; }
.side .row span { flex: 1; letter-spacing: -.4px; }
.side .row .adm { letter-spacing: -.3px; }
.side .row .tog { width: 24px; height: 24px; margin: 0; color: #7c7f82; stroke-width: 2; }
.group { border-left: 8px solid #23529f; background: #16171b; border-bottom: 2px solid #34373c; }
.group .row { height: 88px; border: 0; padding: 0 20px 0 16px; font-weight: 500; color: #d0d1d2; }
.sub { height: 80px; display: flex; align-items: center; padding: 1px 0 0 80px; font-size: 24px; }
.sub.on { background: #262b32; font-weight: 500; letter-spacing: .05px; }
.s2 { letter-spacing: -.15px; }
.s3 { letter-spacing: -.25px; }

.main { flex: 1; min-width: 0; display: flex; flex-direction: column; }
.titlebar { height: 146px; flex: none; border-bottom: 2px solid #a9a9a9; display: flex; align-items: center; padding: 0 32px; }
h1 { font-weight: 400; font-size: 63px; letter-spacing: -1.900px; flex: 1; color: #000; padding-top: 2px; }
.reset { display: flex; align-items: center; margin-right: 56px; color: #111; }
.reset .ic { width: 32px; height: 30px; margin-right: 8px; }
.create { width: 169px; height: 64px; border-radius: 4px; background: #214f9d; border: 1px solid #1c478f; color: #c0c0c0; display: flex; align-items: center; padding-left: 28px; font-weight: 600; }
.create .ic { width: 24px; height: 24px; margin-right: 12px; }
.cols { flex: 1; min-height: 0; display: flex; }
.list { width: 480px; flex: none; border-right: 2px solid #a9a9a9; overflow: hidden; }
.searchrow { height: 128px; padding: 30px 30px 0 32px; border-bottom: 2px solid #a8a8a8; }
.search { height: 64px; border: 2px solid #a8a8a8; background: #bababa; border-radius: 4px 0 0 4px; display: flex; align-items: center; padding-left: 13px; font-size: 28px; color: #6a6a6a; }
.search .ic { width: 32px; height: 32px; color: #000; margin-right: 17px; stroke-width: 2.400; }
.person { height: 138px; border-bottom: 2px solid #b2b2b2; padding: 33px 0 0 32px; }
.person b { display: block; font-weight: 500; font-size: 28px; line-height: 40px; color: #214f9d; letter-spacing: -.22px; }
.person span { display: block; line-height: 32px; color: #484848; }
.hov { background: #bababa; }

.detail { flex: 1; padding: 32px 32px 0; display: flex; flex-direction: column; background: #bcbcbc; }
.card { flex: none; border: 2px solid #acacac; border-radius: 4px; background: #bfbfbf; box-shadow: 0 4px 8px rgba(0,0,0,.05); color: #222; }
.chead { height: 96px; display: flex; align-items: center; justify-content: flex-end; border-bottom: 2px solid #acacac; }
.c1 { height: 765px; margin-bottom: 144px; }
.c1 > i { display: block; height: 74px; border-bottom: 2px solid #afafaf; }
.c1 .last { border: 0; }
.editbtn { display: flex; align-items: center; padding-right: 41px; }
.editbtn .ic { width: 30px; height: 30px; margin-right: 8px; stroke-width: 2.200; }
.c2 { height: 190px; margin-bottom: 32px; }
.add { width: 24px; height: 24px; margin-right: 44px; }
.c3 { height: 332px; }
.tr { display: grid; grid-template-columns: 82px 603px 762px 567px 1fr; }
.tr span { padding-left: 24px; display: flex; align-items: center; border-right: 2px solid #adadad; }
.tr span:last-child { border: 0; }
.th { height: 84px; border-bottom: 2px solid #acacac; font-weight: 600; }
.th span { letter-spacing: .25px; }
.td { height: 64px; background: #b3b3b3; }
.pen .ic { width: 30px; height: 30px; color: #214f9d; }
.pager { display: flex; justify-content: flex-end; align-items: center; height: 86px; padding-right: 28px; }
.foot { margin: 64px -32px 0; flex: 1; border-top: 2px solid #a8a8a8; background: #b3b3b3; overflow: hidden; padding: 32px 34px 0 0; display: flex; justify-content: flex-end; }
.totop { width: 76px; height: 76px; border: 2px solid #a8a8a8; border-radius: 50%; }

/* developer toolbar */
.devbar { position: absolute; left: 758px; bottom: 0; height: 64px; display: flex; background: linear-gradient(#676767, #5c5c5c); color: #f6f6f6; box-shadow: 0 0 30px rgba(0,0,0,.3); }
.devbar a { display: flex; align-items: center; padding: 1px 0 0 25px; border-right: 2px solid #565656; white-space: nowrap; letter-spacing: -.08px; }
.devbar .ic { width: 32px; height: 32px; margin-right: 8px; }
.d1 { width: 157px; } .d2 { width: 287px; } .d3 { width: 230px; } .d4 { width: 179px; } .d5 { width: 227px; }
.d6 { width: 165px; } .d7 { width: 198px; } .d8 { width: 205px; } .d9 { width: 210px; } .devbar .d10 { width: 81px; border: 0; }

/* dialog */
.modal { position: absolute; left: 1008px; top: 411px; width: 1440px; height: 1356px; border-radius: 6px; background: #fff; box-shadow: 0 0 0 2px rgba(0,0,0,.12), 0 40px 110px rgba(0,0,0,.4); display: flex; flex-direction: column; color: #2b2b2b; }
.mhead { height: 98px; flex: none; border-bottom: 2px solid #e4e4e4; display: flex; align-items: center; justify-content: space-between; padding: 0 32px; font-size: 31px; font-weight: 500; color: #000; letter-spacing: 0; }
.mclose { width: 48px; height: 48px; border: 2px solid #dcdcdc; border-radius: 4px; background: #f9f9f9; display: grid; place-items: center; color: #333; }
.mclose .ic { width: 22px; height: 22px; stroke-width: 1.500; }
.mbody { flex: 1; padding: 48px 32px 0; }
.field { position: relative; height: 96px; margin-bottom: 32px; border: 2px solid #dedede; border-radius: 4px; background: #f9f9f9; padding: 13px 14px 0; }
.field::before { content: ""; position: absolute; left: -2px; top: -2px; border: 8px solid transparent; border-left-color: #e0301e; border-top-color: #e0301e; border-top-left-radius: 4px; }
.field label { display: block; font-size: 22px; line-height: 32px; color: #333; letter-spacing: .12px; }
.field span { display: block; line-height: 46px; color: #222; }
.sel .ic { position: absolute; right: 21px; top: 36px; width: 22px; height: 22px; color: #555; }
.err { margin-bottom: 0; }
.errtext { height: 72px; font-size: 22px; line-height: 49px; color: #dc3326; letter-spacing: .05px; }
.cal { position: absolute; right: 0; top: 0; bottom: 0; width: 62px; border-left: 2px solid #dedede; display: grid; place-items: center; }
.cal .ic { width: 30px; height: 30px; }
.mfoot { height: 130px; flex: none; border-top: 2px solid #e4e4e4; display: flex; justify-content: space-between; align-items: center; padding: 0 32px; }
.cancel { width: 126px; height: 64px; border: 2px solid #dedede; border-radius: 4px; background: #f9f9f9; color: #3c3c3c; }
.ok { width: 128px; height: 64px; border: 4px solid #2c68d2; border-radius: 6px; background: #3b82f7; color: #fff; font-weight: 600; }

.alert { position: absolute; left: 232px; top: 130px; width: 1176px; height: 156px; border: 2px solid #dcbb4f; border-radius: 6px; background: #f5d062; box-shadow: 0 24px 50px rgba(0,0,0,.22), 0 4px 20px rgba(0,0,0,.08); display: flex; align-items: center; padding-left: 30px; color: #000; font-size: 28px; }
.warn { width: 48px; height: 46px; margin-right: 32px; }
.atext b { display: block; font-weight: 700; line-height: 44px; margin-top: 1px; letter-spacing: .18px; }
.atext p { display: flex; align-items: center; height: 51px; letter-spacing: -.43px; }
.atext p i { width: 7px; height: 8px; border-radius: 50%; background: #7e6e38; margin: 0 16px 0 16px; }
.atext em { width: 43px; height: 43px; margin-left: 10px; border: 2px solid #dfbf58; border-radius: 4px; display: grid; place-items: center; color: #5f5128; }
.atext em .ic { width: 32px; height: 32px; }
.aclose { position: absolute; right: -18px; top: -18px; width: 48px; height: 48px; border-radius: 50%; border: 1px solid #444; background: #000; color: #fff; display: grid; place-items: center; }
.aclose .ic { width: 20px; height: 20px; stroke-width: 1.500; }

/* dock */
.dock {
  position: relative; margin: 10px 0 0 75px; width: 3306px; height: 110px; border-radius: 36px; border: 2px solid rgba(190,160,170,.35);
  display: flex; padding: 6px 0 0 3px; box-shadow: 0 0 0 1px #0a0508;
  background: linear-gradient(90deg, #191f27 0, #1a1e26 560px, #361826 760px, #451b24 1060px, #4a1c1e 1350px, #3f1723 1700px, #3c1628 2150px, #431b2e 2400px, #4f1d24 2800px, #5c2119 3306px);
}
.app { width: 91.830px; flex: none; display: flex; flex-direction: column; align-items: center; }
.app svg { width: 88px; height: 88px; }
.run::after { content: ""; width: 8px; height: 8px; margin-top: 2px; border-radius: 50%; background: #c08fa0; }
.app.run:nth-child(-n+5)::after { background: #9298a0; }
.sep { width: 2px; height: 82px; margin: 6px 17px 0 21px; flex: none; background: #7c5a62; }
text { font-family: Inter, "Liberation Sans", sans-serif; text-anchor: middle; }
.t-may { font-size: 13px; font-weight: 600; fill: #fff; }
.t-day { font-size: 44px; font-weight: 300; fill: #222; }
.t-pc { font-size: 26px; font-weight: 700; fill: #fff; text-anchor: start; }
.t-pv { font-size: 18px; font-weight: 600; fill: #0c1420; }
.t-zoom { font-size: 19px; font-weight: 600; fill: #fff; }
.t-w { font-size: 18px; font-weight: 700; fill: #fff; }
.t-clock { font-size: 9px; font-weight: 600; fill: #222; }
```
